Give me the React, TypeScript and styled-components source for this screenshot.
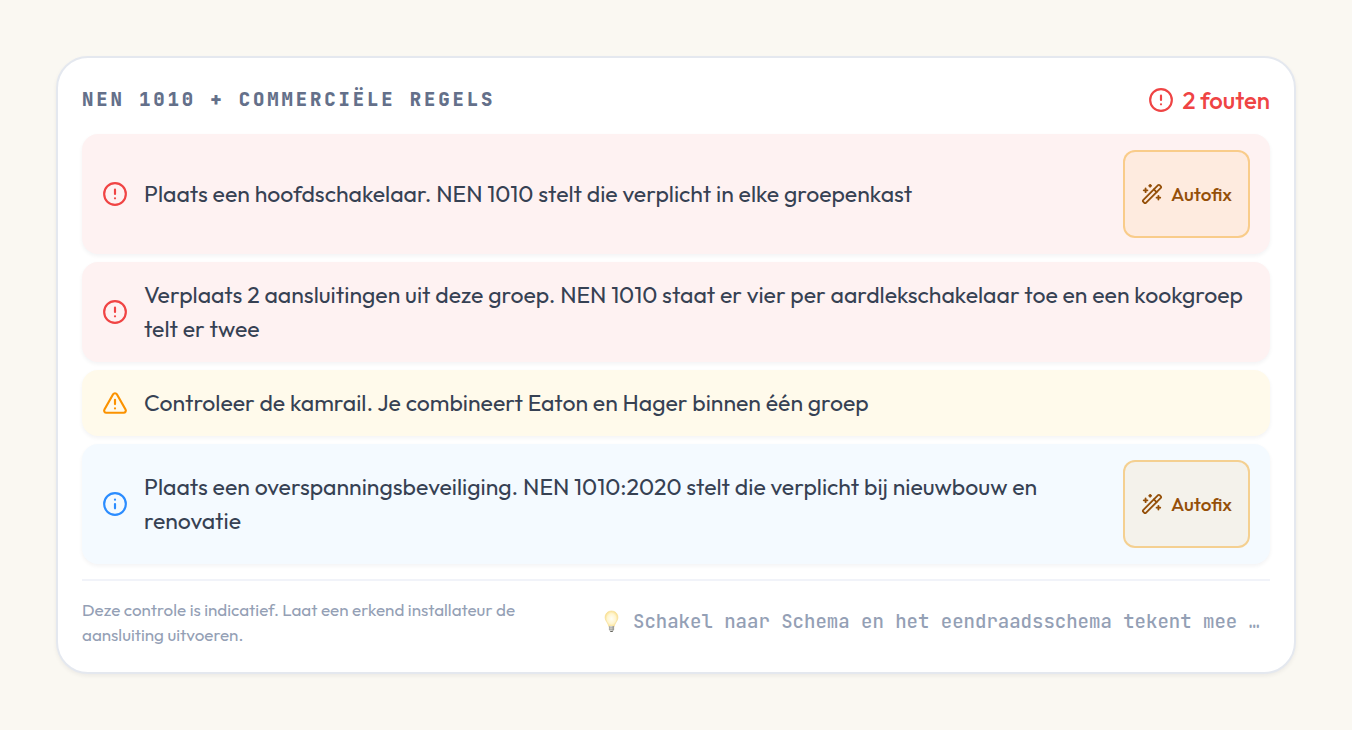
import React from "react";
import styled, { createGlobalStyle } from "styled-components";
import { CircleAlert, Info, TriangleAlert, WandSparkles } from "lucide-react";

type Level = "error" | "warning" | "info";

const levels = {
  error: { icon: CircleAlert, color: "#f04444", background: "#fef2f2", label: "Fout" },
  warning: { icon: TriangleAlert, color: "#fb9200", background: "#fffaeb", label: "Waarschuwing" },
  info: { icon: Info, color: "#2b8cff", background: "#f4faff", label: "Info" },
};

const sans = `Outfit, Lato, "Liberation Sans", sans-serif`;
const mono = `"JetBrains Mono", "DejaVu Sans Mono", "Liberation Mono", monospace`;

const GlobalStyle = createGlobalStyle`
  * { box-sizing: border-box; }
  body { margin: 0; background: #faf8f2; font-family: ${sans}; }
`;

const Page = styled.main`
  padding: 56px;
`;

const Card = styled.section`
  padding: 24px;
  background: #ffffff;
  border: 2px solid #e4e8ef;
  border-radius: 32px;
  box-shadow: 0 2px 4px rgba(15, 23, 42, 0.06);
`;

const Header = styled.header`
  display: flex;
  align-items: center;
  justify-content: space-between;
  margin-bottom: 16px;
`;

const Title = styled.h2`
  margin: 0;
  font-family: ${mono};
  font-size: 19px;
  line-height: 34px;
  font-weight: 800;
  letter-spacing: 0.15em;
  text-transform: uppercase;
  color: #64708a;
`;

const Count = styled.span`
  display: flex;
  align-items: center;
  gap: 8px;
  font-size: 24px;
  line-height: 36px;
  font-weight: 500;
  color: #ef4444;
`;

const RuleList = styled.ul`
  display: flex;
  flex-direction: column;
  gap: 8px;
  margin: 0;
  padding: 0;
  list-style: none;
`;

const Rule = styled.li<{ $level: Level }>`
  display: flex;
  align-items: center;
  gap: 16px;
  padding: 16px 20px;
  border-radius: 16px;
  background: ${({ $level }) => levels[$level].background};
  box-shadow: 0 2px 4px rgba(15, 23, 42, 0.05);

  > svg {
    flex: none;
    color: ${({ $level }) => levels[$level].color};
  }
`;

const Message = styled.p`
  flex: 1;
  margin: 0;
  font-size: 23px;
  line-height: 34px;
  color: #364153;
`;

const FixButton = styled.button`
  display: flex;
  flex: none;
  align-items: center;
  gap: 8px;
  min-height: 88px;
  padding: 0 16px;
  border: 2px solid rgba(245, 158, 11, 0.45);
  border-radius: 12px;
  background: rgba(250, 150, 0, 0.08);
  background-clip: padding-box;
  color: #944f08;
  font-family: ${sans};
  font-size: 19px;
  line-height: 28px;
  font-weight: 500;
  cursor: pointer;
`;

const Footer = styled.footer`
  display: flex;
  align-items: center;
  justify-content: space-between;
  gap: 64px;
  margin-top: 15px;
  padding: 16px 0 1px;
  border-top: 2px solid #f1f3f9;
  color: #94a0b5;
`;

const Disclaimer = styled.p`
  flex: 1;
  margin: 0;
  font-size: 17px;
  line-height: 25px;
`;

const Tip = styled.p`
  display: flex;
  flex: none;
  align-items: center;
  gap: 12px;
  margin: 0;
  padding-right: 10px;
  font-family: ${mono};
  font-size: 19px;
  line-height: 28px;
  font-weight: 500;
`;

const Bulb = () => (
  <svg width="18" height="24" viewBox="0 0 18 24" aria-hidden="true">
    <defs>
      <radialGradient id="glow" cx="50%" cy="50%" r="55%">
        <stop offset="0" stopColor="#fffef5" />
        <stop offset="0.6" stopColor="#fff5cf" />
        <stop offset="1" stopColor="#f9dc84" />
      </radialGradient>
      <linearGradient id="base" x1="0" x2="1">
        <stop offset="0" stopColor="#a8a8a2" />
        <stop offset="0.4" stopColor="#dededa" />
        <stop offset="1" stopColor="#94948e" />
      </linearGradient>
    </defs>
    <path
      d="M8.500 1C4.700 1 2.100 3.900 2.100 7.300c0 2.500 1.200 4 2.300 5.700.8 1.300 1.100 2.500 1.400 3.500h5.400c.3-1 .6-2.200 1.400-3.500 1.100-1.700 2.300-3.200 2.300-5.700C14.900 3.900 12.300 1 8.500 1Z"
      fill="url(#glow)"
      stroke="#f5dc92"
      strokeWidth="0.6"
    />
    <path d="M5.900 16h5.200v3.600L9.900 21.500H7.100l-1.200-1.900Z" fill="url(#base)" />
    <path d="M6 17.800h5M6.200 19.500h4.600" stroke="#9b9b96" strokeWidth="0.6" />
    <path d="M7 20.900h3l-.5 1.100h-2Z" fill="#66665f" />
  </svg>
);

const rules: { level: Level; text: string; fixable?: boolean }[] = [
  {
    level: "error",
    text: "Plaats een hoofdschakelaar. NEN 1010 stelt die verplicht in elke groepenkast",
    fixable: true,
  },
  {
    level: "error",
    text: "Verplaats 2 aansluitingen uit deze groep. NEN 1010 staat er vier per aardlekschakelaar toe en een kookgroep telt er twee",
  },
  {
    level: "warning",
    text: "Controleer de kamrail. Je combineert Eaton en Hager binnen één groep",
  },
  {
    level: "info",
    text: "Plaats een overspanningsbeveiliging. NEN 1010:2020 stelt die verplicht bij nieuwbouw en renovatie",
    fixable: true,
  },
];

export default function App() {
  return (
    <Page>
      <GlobalStyle />
      <Card>
        <Header>
          <Title>NEN 1010 + Commerciële regels</Title>
          <Count>
            <CircleAlert size={26} aria-hidden="true" />
            2 fouten
          </Count>
        </Header>
        <RuleList>
          {rules.map(({ level, text, fixable }) => {
            const Icon = levels[level].icon;
            return (
              <Rule key={text} $level={level}>
                <Icon size={26} aria-label={levels[level].label} />
                <Message>{text}</Message>
                {fixable && (
                  <FixButton type="button">
                    <WandSparkles size={22} aria-hidden="true" />
                    Autofix
                  </FixButton>
                )}
              </Rule>
            );
          })}
        </RuleList>
        <Footer>
          <Disclaimer>
            Deze controle is indicatief. Laat een erkend installateur de aansluiting uitvoeren.
          </Disclaimer>
          <Tip>
            <Bulb />
            Schakel naar Schema en het eendraadsschema tekent mee …
          </Tip>
        </Footer>
      </Card>
    </Page>
  );
}
